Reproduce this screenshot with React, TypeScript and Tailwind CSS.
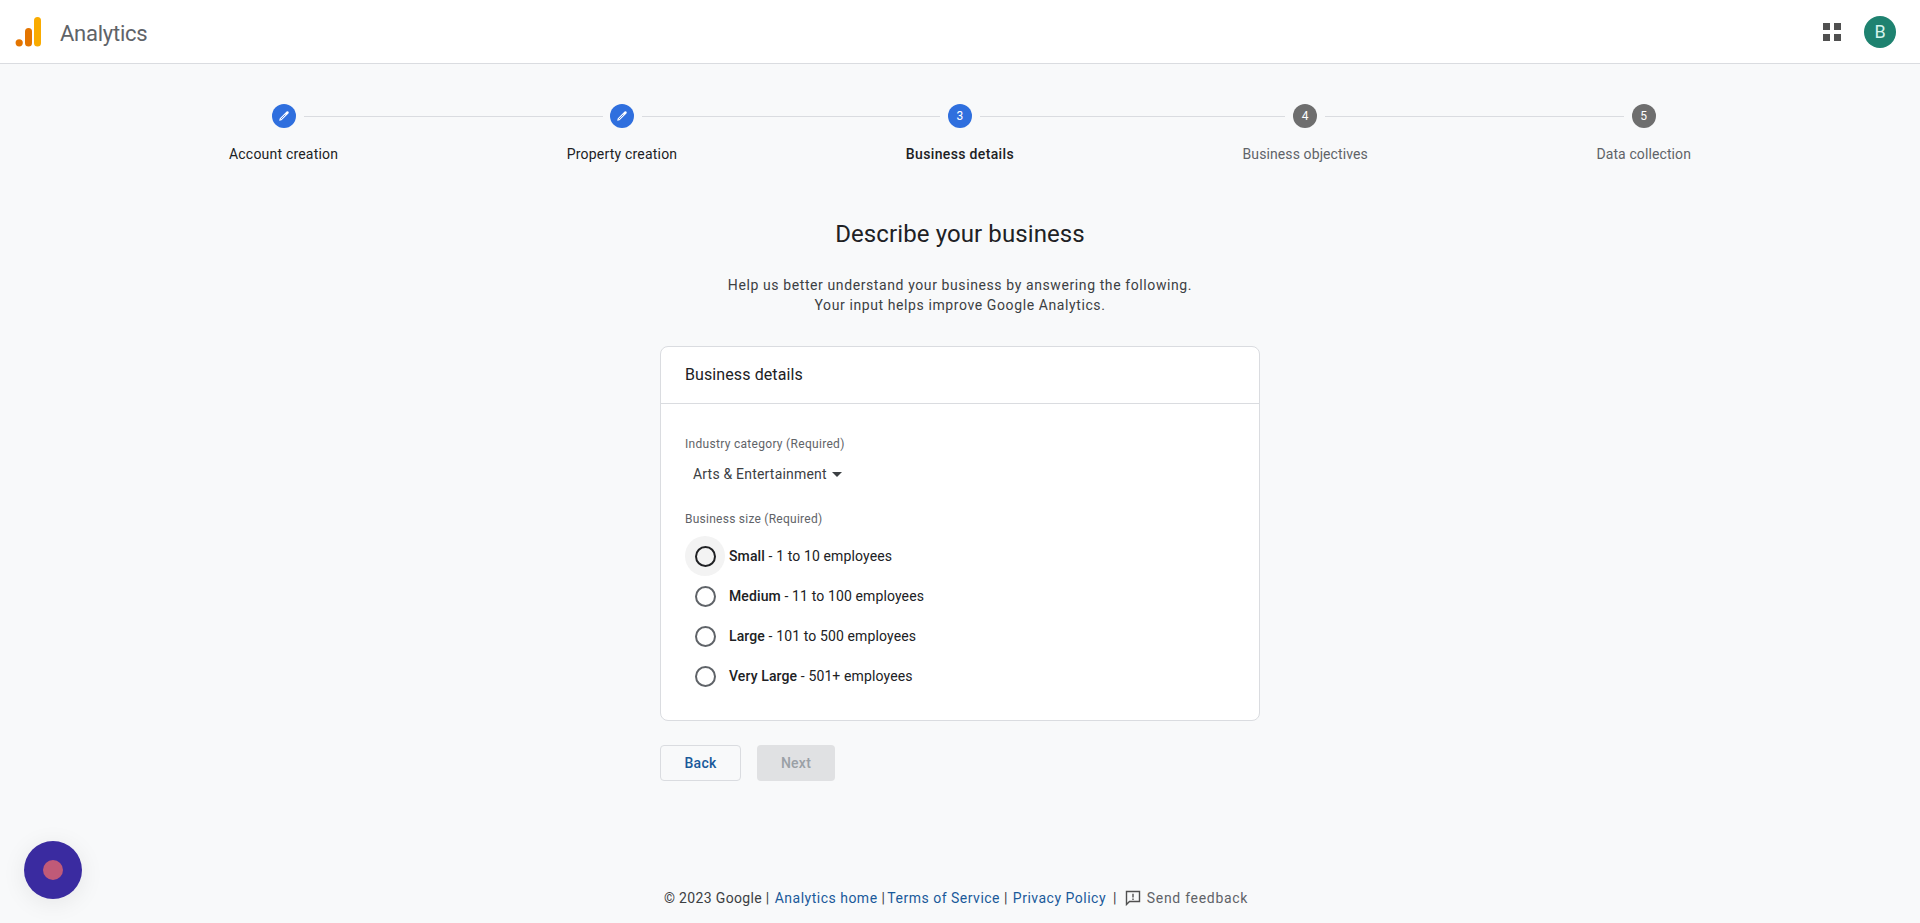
const steps = [
  { label: "Account creation", state: "done", line: "w-[299px]" },
  { label: "Property creation", state: "done", line: "w-[298px]" },
  { label: "Business details", state: "active", num: 3, line: "w-[305px]" },
  { label: "Business objectives", state: "todo", num: 4, line: "w-[299px]" },
  { label: "Data collection", state: "todo", num: 5, line: "" },
];

const sizes = [
  { name: "Small", text: "1 to 10 employees" },
  { name: "Medium", text: "11 to 100 employees" },
  { name: "Large", text: "101 to 500 employees" },
  { name: "Very Large", text: "501+ employees" },
];

function Logo() {
  return (
    <svg width="28" height="30" viewBox="0 0 28 30" className="shrink-0">
      <circle cx="4.2" cy="25.8" r="3.6" fill="#e37400" />
      <rect x="10" y="11" width="7" height="18.4" rx="3.5" fill="#e37400" />
      <rect x="19" y="0" width="7" height="29.4" rx="3.5" fill="#f9ab00" />
    </svg>
  );
}

function Pencil() {
  return (
    <svg width="14" height="14" viewBox="0 0 14 14" fill="none">
      <path d="M2.2 11.8l.5-2.3 6.9-6.9a1.2 1.2 0 0 1 1.7 0l.1.1a1.2 1.2 0 0 1 0 1.7l-6.9 6.9z" fill="#ffffff" />
      <path d="M3.8 10.2L8.4 5.6" stroke="#2f6fde" strokeWidth="0.8" />
    </svg>
  );
}

function Stepper() {
  return (
    <div className="flex justify-between pl-[229px] pr-[229px] pt-[40px]">
      {steps.map((step) => (
        <div key={step.label} className="relative flex flex-col items-center">
          <div
            className={`flex h-6 w-6 items-center justify-center rounded-full text-[12px] text-white ${
              step.state === "todo" ? "bg-[#6e6e6e]" : "bg-[#2f6fde]"
            }`}
          >
            {step.state === "done" ? <Pencil /> : step.num}
          </div>
          {step.line && (
            <div className={`absolute left-[calc(50%+20px)] top-[12px] h-px bg-[#dadce0] ${step.line}`} />
          )}
          <div
            className={`mt-[16px] text-[14px] leading-[20px] whitespace-nowrap ${
              step.state === "active"
                ? "font-medium tracking-[0.35px] text-[#202124]"
                : step.state === "done"
                  ? "tracking-[0.2px] text-[#202124]"
                  : "tracking-[0.1px] text-[#5f6368]"
            }`}
          >
            {step.label}
          </div>
        </div>
      ))}
    </div>
  );
}

function Radio({ name, text, focused }: { name: string; text: string; focused: boolean }) {
  return (
    <div className="flex h-10 items-center">
      <div
        className={`flex h-10 w-10 items-center justify-center rounded-full ${focused ? "bg-[#f3f3f3]" : ""}`}
      >
        <div className={`h-[21px] w-[21px] rounded-full border-2 ${focused ? "border-[#202124]" : "border-[#5f6368]"}`} />
      </div>
      <div className="ml-[4px] text-[14px] tracking-[0.12px] text-[#202124]">
        <span className="font-medium">{name}</span> - {text}
      </div>
    </div>
  );
}

export default function App() {
  return (
    <div className="relative flex h-screen flex-col overflow-hidden bg-[#f8f9fa] font-['Roboto',sans-serif]">
      <header className="flex h-[64px] shrink-0 items-center border-b border-[#dadce0] bg-white pl-[15px] pr-[24px]">
        <Logo />
        <div className="ml-[17px] pt-[3px] text-[22px] tracking-[-0.25px] text-[#5f6368]">Analytics</div>
        <div className="ml-auto flex items-center">
          <div className="grid grid-cols-2 gap-[4px]">
            <span className="h-[7px] w-[7px] bg-[#505050]" />
            <span className="h-[7px] w-[7px] bg-[#505050]" />
            <span className="h-[7px] w-[7px] bg-[#505050]" />
            <span className="h-[7px] w-[7px] bg-[#505050]" />
          </div>
          <div className="ml-[23px] flex h-8 w-8 items-center justify-center rounded-full bg-[#1e8270] text-[18px] text-[#d3f3ec]">
            B
          </div>
        </div>
      </header>

      <Stepper />

      <main className="mx-auto flex w-[600px] flex-col">
        <h1 className="mt-[54px] text-center text-[24px] leading-[32px] tracking-[0.1px] text-[#202124]">Describe your business</h1>
        <p className="mt-[25px] text-center text-[14px] leading-[20px] tracking-[0.6px] text-[#3c4043]">
          Help us better understand your business by answering the following.
          <br />
          Your input helps improve Google Analytics.
        </p>

        <section className="mt-[31px] rounded-lg border border-[#dadce0] bg-white">
          <div className="flex h-[57px] items-center border-b border-[#dadce0] pl-[24px] text-[16px] tracking-[0.1px] text-[#202124]">
            Business details
          </div>
          <div className="px-[24px] pt-[32px] pb-[24px]">
            <div className="text-[12px] leading-[16px] tracking-[0.3px] text-[#5f6368]">Industry category (Required)</div>
            <div className="mt-[6px] flex h-[32px] items-center pl-[8px] text-[14px] tracking-[0.2px] text-[#3c4043]">
              Arts &amp; Entertainment
              <span className="ml-[5px] h-0 w-0 border-x-[5px] border-t-[5px] border-x-transparent border-t-[#3c4043]" />
            </div>
            <div className="mt-[21px] text-[12px] leading-[16px] tracking-[0.25px] text-[#5f6368]">Business size (Required)</div>
            <div className="mt-[9px]">
              {sizes.map((s, i) => (
                <Radio key={s.name} name={s.name} text={s.text} focused={i === 0} />
              ))}
            </div>
          </div>
        </section>

        <div className="mt-[24px] flex gap-[16px]">
          <button className="h-[36px] w-[81px] rounded border border-[#dadce0] text-[14px] font-medium tracking-[0.25px] text-[#1a5a9a]">
            Back
          </button>
          <button className="h-[36px] w-[78px] rounded bg-[#e0e1e3] text-[14px] font-medium tracking-[0.25px] text-[#9aa0a6]">
            Next
          </button>
        </div>
      </main>

      <footer className="mt-auto mb-[16px] flex items-center justify-center pr-[8px] text-[14px] leading-[18px] tracking-[0.35px] text-[#3c4043]">
        <span className="mr-[5px]">© 2023 Google |</span>
        <span className="tracking-[0.5px] text-[#1a5a9a]">Analytics home</span>
        <span className="ml-[4px] mr-[2px]">|</span>
        <span className="tracking-[0.5px] text-[#1a5a9a]">Terms of Service</span>
        <span className="ml-[4px] mr-[5px]">|</span>
        <span className="tracking-[0.5px] text-[#1a5a9a]">Privacy Policy</span>
        <span className="ml-[7px]">|</span>
        <svg width="16" height="16" viewBox="0 0 16 16" fill="none" className="ml-[8px] mr-[6px]">
          <path d="M1.5 1.5h13v10H4.5l-3 3z" stroke="#505050" strokeWidth="1.4" />
          <path d="M8 3.8v3.6M8 8.6v1.4" stroke="#505050" strokeWidth="1.4" />
        </svg>
        <span className="tracking-[0.7px] text-[#5f6368]">Send feedback</span>
      </footer>

      <div className="absolute bottom-[24px] left-[24px] flex h-[58px] w-[58px] items-center justify-center rounded-full bg-[#3a2ba0] shadow-[0_4px_24px_rgba(0,0,0,0.08)]">
        <div className="h-5 w-5 rounded-full bg-[#c05a78]" />
      </div>
    </div>
  );
}
